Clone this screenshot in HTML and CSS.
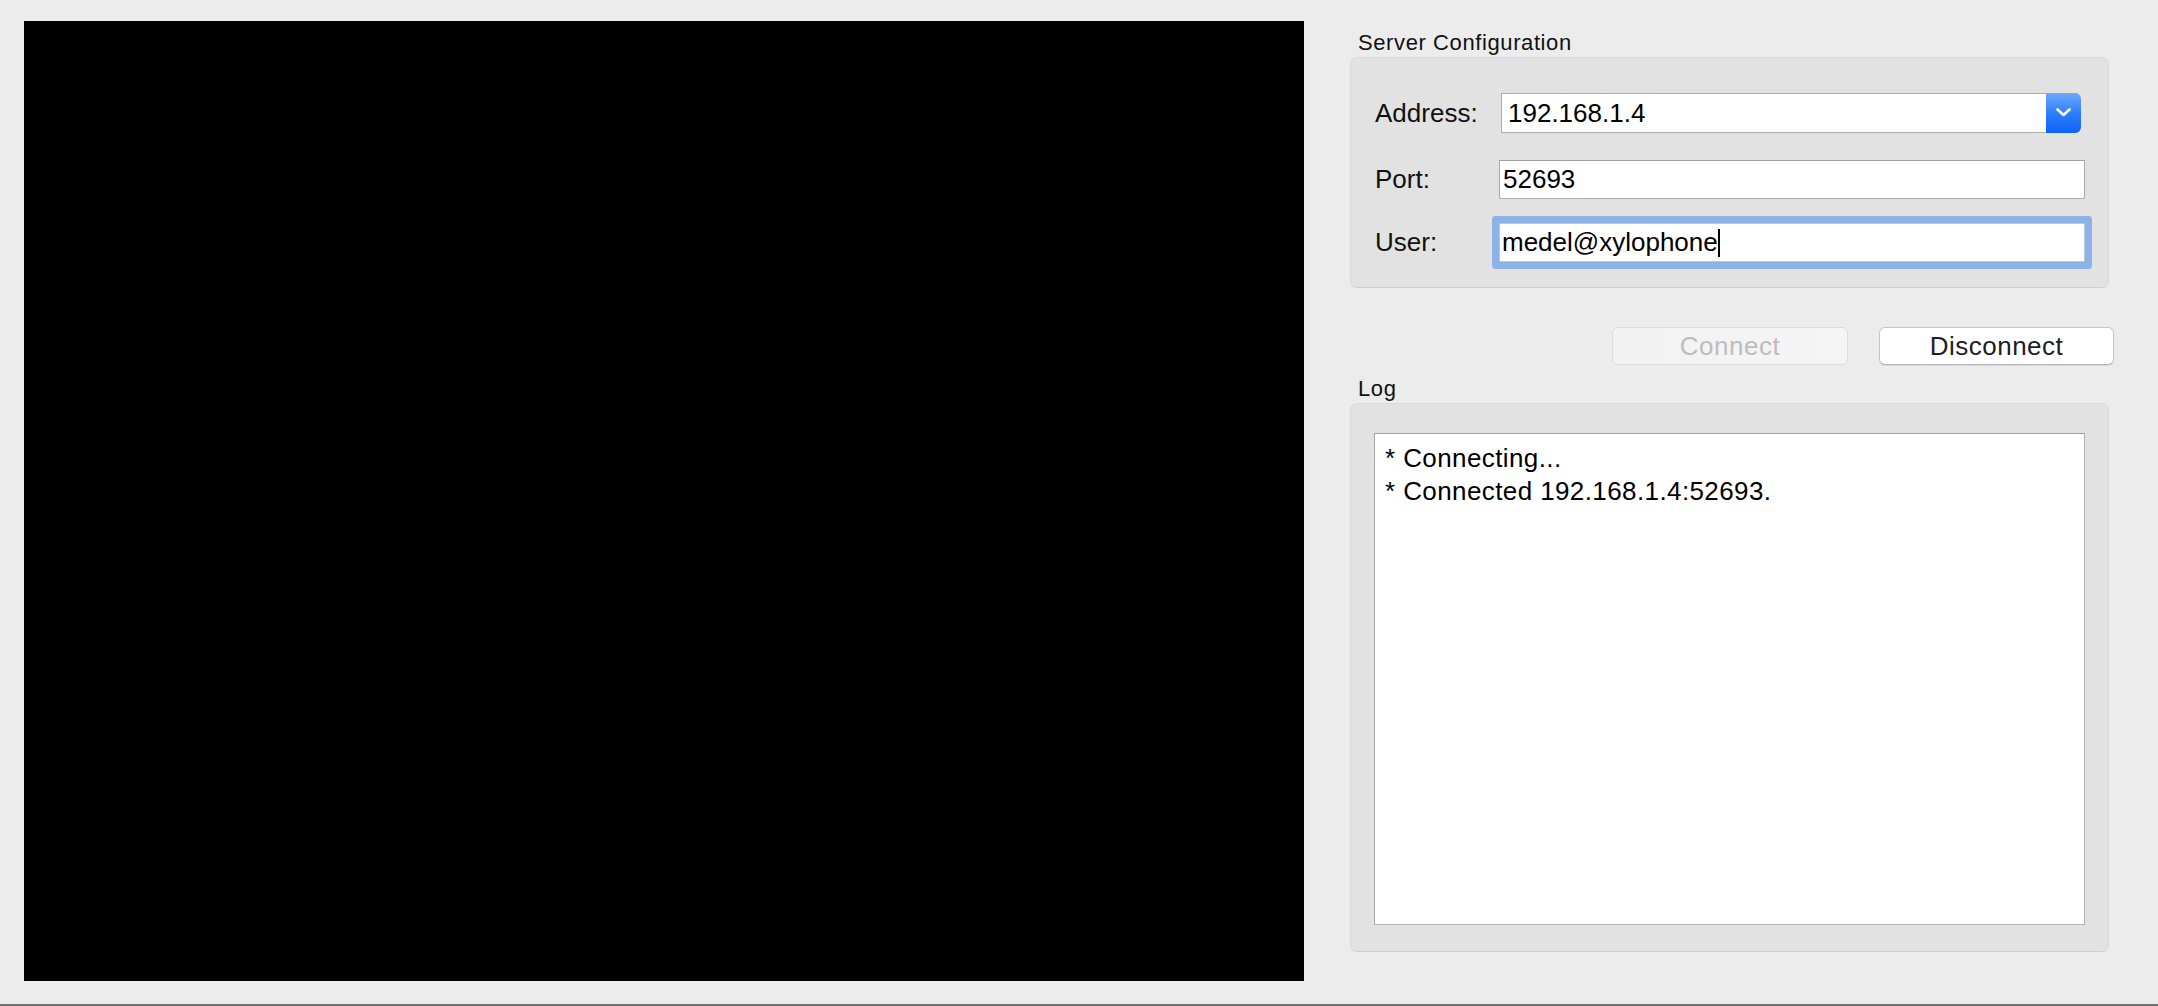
FILE: index.html
```html
<!DOCTYPE html>
<html>
<head>
<meta charset="utf-8">
<title>Server Configuration</title>
<link rel="stylesheet" href="styles.css">
</head>
<body>
<div class="window">
  <div class="canvas"></div>
  <div class="panel">
    <div class="group-title">Server Configuration</div>
    <div class="group config">
      <div class="label">Address:</div>
      <div class="combo">
        <div class="combo-text">192.168.1.4</div>
        <div class="combo-button">
          <svg width="15" height="9" viewBox="0 0 15 9"><path d="M1.5 1.5 L7.5 7 L13.5 1.5" fill="none" stroke="#fff" stroke-width="2.6" stroke-linecap="round" stroke-linejoin="round"/></svg>
        </div>
      </div>
      <div class="label">Port:</div>
      <div class="field">52693</div>
      <div class="label">User:</div>
      <div class="field focused">medel@xylophone<span class="caret"></span></div>
    </div>
    <div class="buttons">
      <div class="button disabled">Connect</div>
      <div class="button">Disconnect</div>
    </div>
    <div class="group-title log-title">Log</div>
    <div class="group log">
      <div class="log-area">
        <div class="log-line">* Connecting...</div>
        <div class="log-line">* Connected 192.168.1.4:52693.</div>
      </div>
    </div>
  </div>
</div>
</body>
</html>
```
FILE: styles.css
```css
html, body {
  margin: 0;
  padding: 0;
  background: #ececec;
}
body {
  font-family: "Liberation Sans", Arial, sans-serif;
  color: #000;
}
.window {
  height: 1004px;
  border-bottom: 2px solid #6e6e6e;
  display: flex;
  align-items: flex-start;
  padding: 21px 0 0 24px;
  box-sizing: content-box;
}
.window {
  height: 983px;
}
.canvas {
  width: 1280px;
  height: 960px;
  background: #000;
  flex: none;
}
.panel {
  margin-left: 46px;
  width: 764px;
  padding-top: 9px;
  display: flex;
  flex-direction: column;
}
.group-title {
  font-size: 22px;
  line-height: 26px;
  height: 26px;
  padding-left: 8px;
  margin-bottom: 1px;
  letter-spacing: 0.6px;
  color: #111;
}
.log-title {
  margin-top: 11px;
}
.group {
  width: 759px;
  box-sizing: border-box;
  background: #e2e2e2;
  border: 1px solid #dadada;
  border-bottom-color: #cfcfcf;
  border-radius: 7px;
}
.config {
  height: 231px;
  padding: 35px 23px 25px 24px;
  display: grid;
  grid-template-columns: 124px 586px;
  grid-template-rows: 40px 39px 39px;
  row-gap: 0;
  align-items: center;
}
.config > :nth-child(3), .config > :nth-child(4) {
  margin-top: 27px;
}
.config > :nth-child(5), .config > :nth-child(6) {
  margin-top: 24px;
}
.config {
  grid-template-rows: 40px 66px 63px;
}
.config > .field, .config > .combo {
  align-self: end;
}
.config > .label {
  align-self: end;
}
.label {
  font-size: 26px;
  line-height: 39px;
  height: 39px;
  color: #111;
}
.config > .label:first-child {
  line-height: 40px;
  height: 40px;
}
.combo {
  margin: 0 4px 0 2px;
  height: 40px;
  box-sizing: border-box;
  border: 1px solid #acacac;
  border-right: none;
  border-radius: 0 6px 6px 0;
  background: #fff;
  display: flex;
  align-items: stretch;
}
.combo-text {
  flex: 1;
  font-size: 26px;
  line-height: 38px;
  padding-left: 6px;
}
.combo-button {
  width: 35px;
  margin: -1px 0 -1px 0;
  border-radius: 0 6px 6px 0;
  background: linear-gradient(#6da9fc, #2b7bf9 55%, #0b63fa);
  display: flex;
  align-items: center;
  justify-content: center;
}
.combo-button svg {
  display: block;
  margin-top: -1px;
}
.field {
  height: 39px;
  box-sizing: border-box;
  border: 1px solid #ababab;
  border-top-color: #a0a0a0;
  background: #fff;
  font-size: 26px;
  line-height: 37px;
  padding-left: 3px;
  white-space: nowrap;
}
.field.focused {
  border-color: #b6c8e2;
  border-radius: 1px;
  box-shadow: 0 0 0 7px #8cb2e8;
  padding-left: 2px;
}
.caret {
  display: inline-block;
  width: 2px;
  height: 28px;
  background: #000;
  vertical-align: -6px;
}
.buttons {
  margin-top: 39px;
  display: flex;
  justify-content: flex-end;
  gap: 31px;
}
.button {
  width: 235px;
  height: 38px;
  box-sizing: border-box;
  border: 1px solid #c6c6c6;
  border-bottom-color: #b3b3b3;
  border-radius: 6px;
  background: #fff;
  box-shadow: 0 1px 1px rgba(0, 0, 0, 0.08);
  font-size: 26px;
  line-height: 36px;
  text-align: center;
  letter-spacing: 0.5px;
  color: #1e1e1e;
}
.button.disabled {
  width: 236px;
  background: linear-gradient(90deg, #f2f2f2, #f5f5f5);
  border-color: #dddddd;
  box-shadow: none;
  color: #bdbdbd;
}
.log {
  height: 549px;
  padding: 29px 23px 26px 23px;
}
.log-area {
  height: 492px;
  box-sizing: border-box;
  background: #fff;
  border: 1px solid #b0b0b0;
  border-top-color: #9d9d9d;
  border-left-color: #a4a4a4;
  padding: 8px 0 0 10px;
}
.log-line {
  font-size: 26px;
  line-height: 33px;
  letter-spacing: 0.4px;
  white-space: nowrap;
}
```
